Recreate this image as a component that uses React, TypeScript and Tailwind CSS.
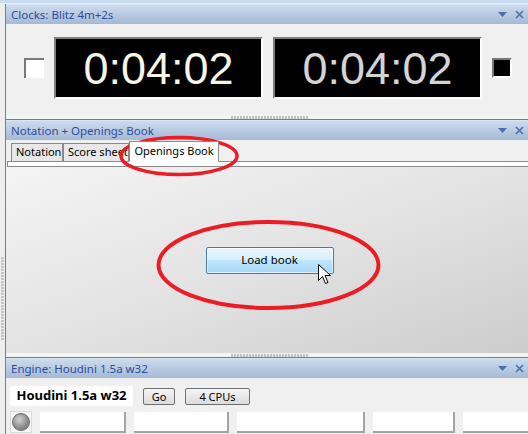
import React from "react";

const ui = "font-['Segoe_UI','Noto_Sans','Liberation_Sans',sans-serif]";

function TitleBar({ title }: { title: string }) {
  return (
    <div className="h-[20px] shrink-0 flex items-center justify-between pl-[5px] pr-[9px] bg-gradient-to-b from-[#cbdcf0] to-[#a6b9d3] border-t border-t-[#dbe6f4]">
      <span className="text-[11.5px] leading-none text-[#2b4d9e]">{title}</span>
      <div className="flex items-center gap-[8px]">
        <svg width="9" height="5" viewBox="0 0 9 5">
          <path d="M0 0h9L4.5 5z" fill="#4a6fae" />
        </svg>
        <svg width="9" height="9" viewBox="0 0 9 9">
          <path d="M1 1l7 7M8 1L1 8" stroke="#4a6fae" strokeWidth="1.6" />
        </svg>
      </div>
    </div>
  );
}

// little checkered grip used on the splitters
function Grip() {
  return (
    <div className="w-[78px] h-[3px] bg-[repeating-linear-gradient(90deg,#c4c4c4_0_2px,#ececec_2px_3px)]" />
  );
}

function Splitter() {
  return (
    <div className="h-[5px] shrink-0 flex items-center justify-center bg-[#f4f4f4] border-b border-b-[#7a7a7a]">
      <Grip />
    </div>
  );
}

function Clock({ time, color }: { time: string; color: string }) {
  return (
    <div className="w-[209px] h-[62px] bg-black border-t-2 border-l-2 border-t-[#7f7f7f] border-l-[#7f7f7f] border-b-2 border-r-2 border-b-white border-r-white flex items-center justify-center">
      <span className={`font-['Liberation_Sans',Arial,sans-serif] text-[45px] leading-none ${color}`}>{time}</span>
    </div>
  );
}

function Tab({ label, active, w }: { label: string; active?: boolean; w: string }) {
  if (active) {
    return (
      <div className={`${w} h-[21px] -mb-px bg-white border border-[#8a8a8a] border-b-white flex items-center justify-center text-[11px] text-black z-10 whitespace-nowrap`}>
        {label}
      </div>
    );
  }
  return (
    <div className={`${w} h-[18px] bg-[#e8e8e8] border border-[#8a8a8a] border-b-0 flex items-center pl-[4px] text-[11px] text-black overflow-hidden whitespace-nowrap`}>
      {label}
    </div>
  );
}

function Field({ w }: { w: string }) {
  return <div className={`${w} h-[21px] bg-white border-r-2 border-b-2 border-r-[#a3a3a3] border-b-[#a3a3a3]`} />;
}

export default function App() {
  return (
    <div className={`relative w-[528px] h-[434px] overflow-hidden flex bg-[#f0f0f0] ${ui}`}>
      <div className="w-[2px] bg-[#5f6c96]" />
      <div className="flex-1 flex flex-col">
        <div className="h-[4px] shrink-0 bg-[#c9dcf1] border-b border-b-[#e6eef8]" />
        <div className="flex-1 flex">
          {/* left dock gutter */}
          <div className="w-[5px] bg-[#eeeeee] flex items-center pt-[160px]">
            <div className="w-[3px] h-[84px] ml-[1px] bg-[repeating-linear-gradient(180deg,#c4c4c4_0_2px,#ececec_2px_3px)]" />
          </div>
          <div className="flex-1 flex flex-col border-l border-l-[#7d7d7d]">
            {/* clocks */}
            <TitleBar title="Clocks: Blitz 4m+2s" />
            <div className="h-[91px] shrink-0 flex items-center pl-[18px] pr-[14px] pb-[3px]">
              <div className="w-[20px] h-[20px] bg-white border-t-2 border-l-2 border-[#7a7a7a]" />
              <div className="ml-[10px]">
                <Clock time="0:04:02" color="text-[#f6f5e6]" />
              </div>
              <div className="ml-[10px]">
                <Clock time="0:04:02" color="text-[#d4d4d4]" />
              </div>
              <div className="ml-[10px] w-[20px] h-[20px] bg-black border-t-2 border-l-2 border-t-[#777] border-l-[#777] border-b-2 border-r-2 border-b-white border-r-white" />
            </div>
            <Splitter />

            {/* notation + book */}
            <TitleBar title="Notation + Openings Book" />
            <div className="h-[21px] shrink-0 pl-[5px] flex items-end">
              <Tab label="Notation" w="w-[52px]" />
              <Tab label="Score sheet" w="w-[66px]" />
              <Tab label="Openings Book" active w="w-[90px]" />
            </div>
            <div className="h-[6px] shrink-0 ml-[1px] mr-[2px] bg-white border border-[#8a8a8a]" />
            <div className="h-[186px] shrink-0 bg-gradient-to-br from-[#f4f4f4] via-[#e3e3e3] to-[#cccccc] flex items-center justify-center">
              <button className="w-[128px] h-[27px] rounded-[2px] border border-[#3c7fb1] bg-[linear-gradient(180deg,#eaf6fd_0%,#d9f0fc_45%,#bee6fd_50%,#a7d9f5_100%)] text-[11.5px] text-black shadow-[inset_0_0_0_1px_rgba(255,255,255,0.6)]">
                Load book
              </button>
            </div>
            <Splitter />

            {/* engine */}
            <TitleBar title="Engine: Houdini 1.5a w32" />
            <div className="flex-1 flex flex-col pl-[4px] pt-[8px] gap-[5px]">
              <div className="flex items-center">
                <div className="w-[123px] h-[20px] bg-white flex items-center justify-center text-[13px] font-bold text-black">
                  Houdini 1.5a w32
                </div>
                <button className="ml-[10px] w-[32px] h-[17px] rounded-[2px] border border-[#707070] bg-gradient-to-b from-[#f4f4f4] to-[#dcdcdc] text-[11px] leading-none text-black">
                  Go
                </button>
                <button className="ml-[10px] w-[65px] h-[17px] rounded-[2px] border border-[#707070] bg-gradient-to-b from-[#f4f4f4] to-[#dcdcdc] text-[11px] leading-none text-black">
                  4 CPUs
                </button>
              </div>
              <div className="flex items-center gap-[8px]">
                <div className="w-[22px] h-[22px] flex items-center justify-center bg-[#f7f7f7] border border-[#dadada]">
                  <div className="w-[18px] h-[18px] rounded-full bg-[radial-gradient(circle_at_40%_35%,#d0d0d0,#8a8a8a_60%,#6c6c6c)] border border-[#6a6a6a]" />
                </div>
                <Field w="w-[86px]" />
                <Field w="w-[95px]" />
                <Field w="w-[128px]" />
                <Field w="w-[82px]" />
                <Field w="w-[70px]" />
              </div>
            </div>
          </div>
        </div>
      </div>

      {/* pointer over the button */}
      <svg className="absolute left-[318px] top-[264px]" width="14" height="21" viewBox="0 0 14 21">
        <path d="M0.5 0.5v16l4-4 3 7 2.5-1-3-7h5.5z" fill="white" stroke="black" strokeWidth="1" strokeLinejoin="miter" />
      </svg>

      {/* red marker rings */}
      <svg className="absolute inset-0 pointer-events-none" width="528" height="434">
        <ellipse cx="179" cy="156" rx="58" ry="18.5" fill="none" stroke="#ec1b24" strokeWidth="3.5" />
        <ellipse cx="268.5" cy="265" rx="110" ry="43" fill="none" stroke="#ec1b24" strokeWidth="4" />
      </svg>
    </div>
  );
}
